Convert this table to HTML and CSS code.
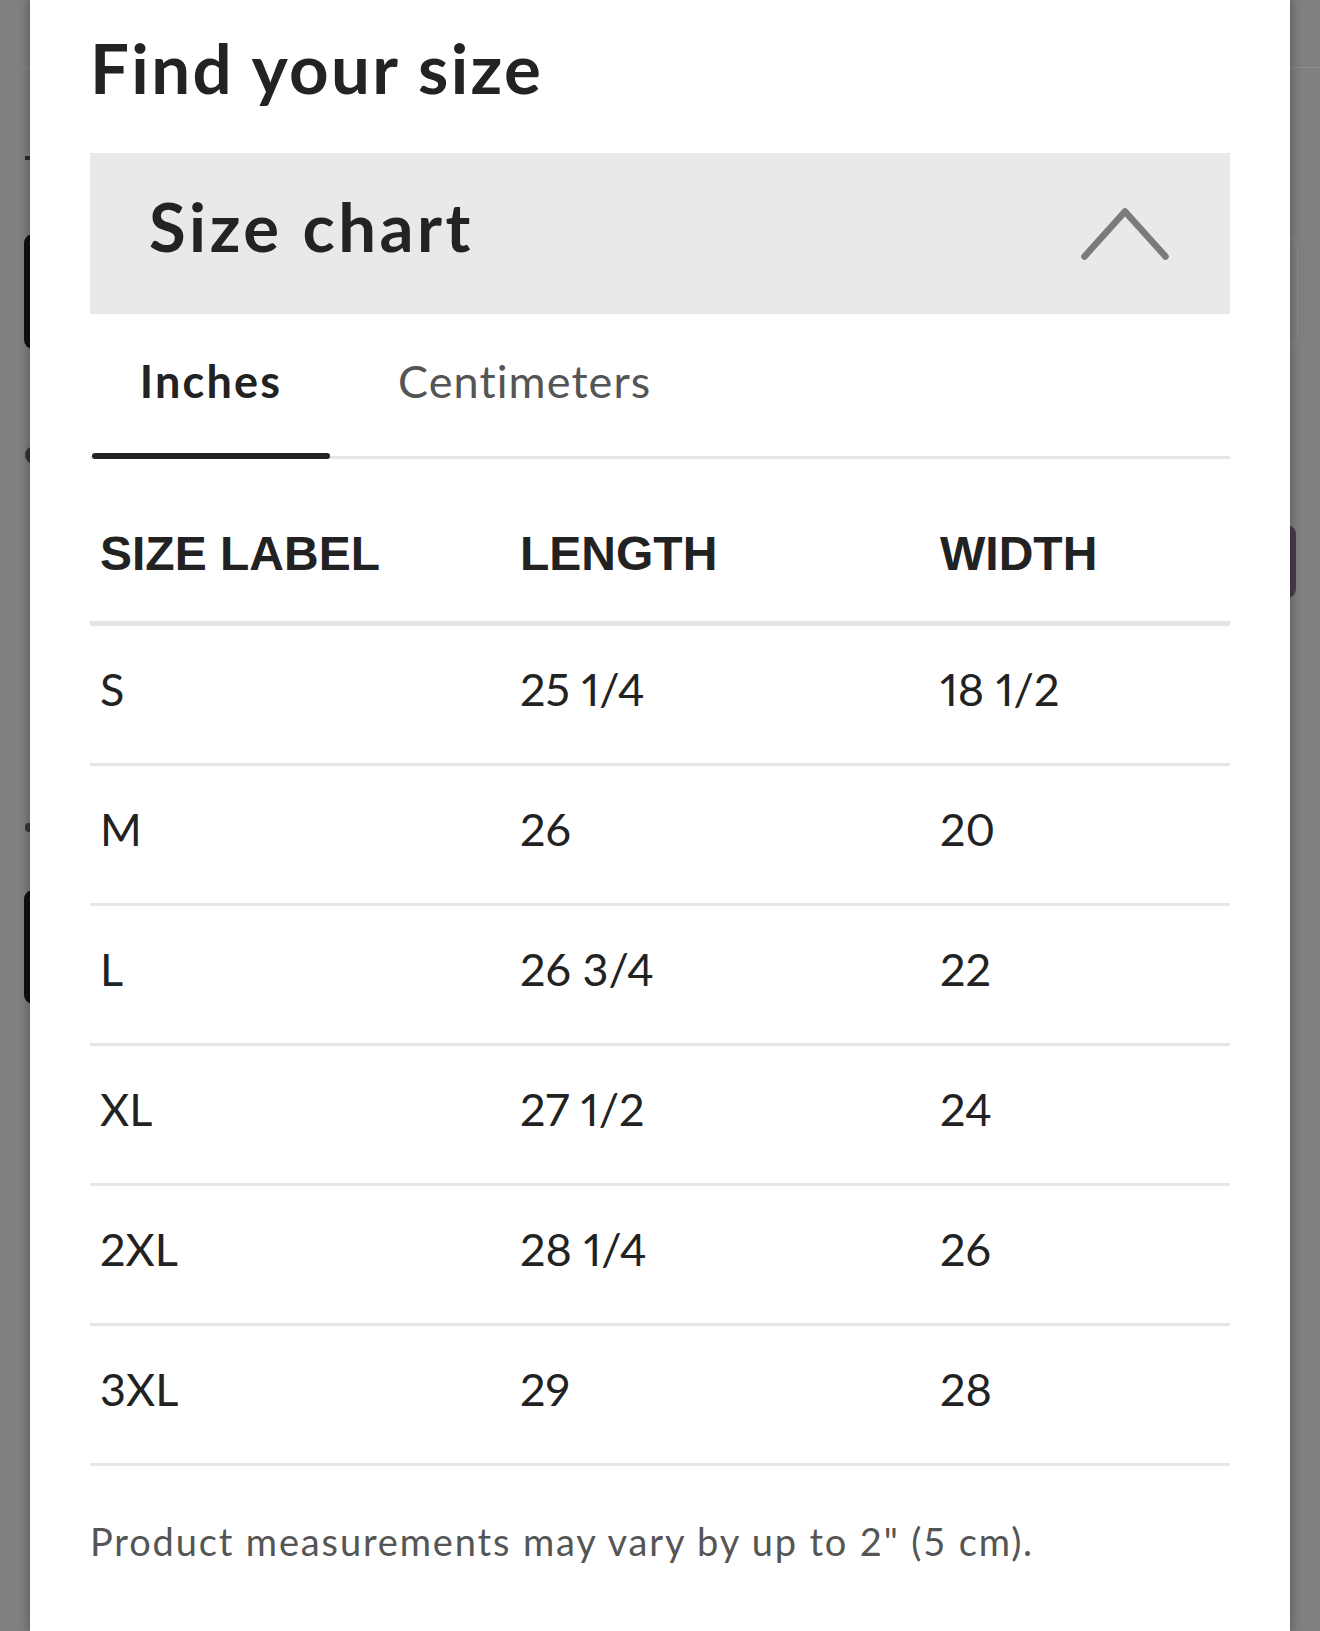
FILE: index.html
```html
<!DOCTYPE html>
<html lang="en">
<head>
<meta charset="utf-8">
<title>Find your size</title>
<link rel="stylesheet" href="styles.css">
</head>
<body>
<div class="backdrop">
  <span class="bg-line bg-line-l"></span>
  <span class="bg-dash"></span>
  <span class="bg-btn bg-btn-1"></span>
  <span class="bg-dot"></span>
  <span class="bg-s"></span>
  <span class="bg-btn bg-btn-2"></span>
  <span class="bg-line bg-line-r"></span>
  <span class="bg-outline"></span>
  <span class="bg-pill"></span>
</div>
<main class="modal">
  <h1 class="title">Find your size</h1>
  <section class="accordion">
    <div class="accordion-head">
      <h2 class="accordion-title">Size chart</h2>
      <svg class="chevron" width="88" height="52" viewBox="0 0 88 52" aria-hidden="true">
        <polyline points="3.5,48.5 44,3.5 84.5,48.5" fill="none" stroke="#7b7b7b" stroke-width="6.5" stroke-linecap="round" stroke-linejoin="round"/>
      </svg>
    </div>
    <div class="tabs">
      <div class="tab tab-active">Inches</div>
      <div class="tab tab-second">Centimeters</div>
    </div>
    <div class="chart">
      <div class="row head">
        <div class="cell">SIZE LABEL</div>
        <div class="cell">LENGTH</div>
        <div class="cell">WIDTH</div>
      </div>
      <div class="row"><div class="cell">S</div><div class="cell">25 1/4</div><div class="cell">18 1/2</div></div>
      <div class="row"><div class="cell">M</div><div class="cell">26</div><div class="cell">20</div></div>
      <div class="row"><div class="cell">L</div><div class="cell">26 3/4</div><div class="cell">22</div></div>
      <div class="row"><div class="cell">XL</div><div class="cell">27 1/2</div><div class="cell">24</div></div>
      <div class="row"><div class="cell">2XL</div><div class="cell">28 1/4</div><div class="cell">26</div></div>
      <div class="row"><div class="cell">3XL</div><div class="cell">29</div><div class="cell">28</div></div>
    </div>
    <p class="note">Product measurements may vary by up to 2" (5 cm).</p>
  </section>
</main>
</body>
</html>
```
FILE: styles.css
```css
html, body {
  margin: 0;
  padding: 0;
}
body {
  background: #808080;
  min-height: 1631px;
  position: relative;
  overflow: hidden;
  font-family: Lato, "Noto Sans", sans-serif;
  font-variant-ligatures: none;
  color: #222;
}
.backdrop {
  position: absolute;
  inset: 0;
  z-index: 0;
}
.backdrop span {
  position: absolute;
  display: block;
}
.bg-line { height: 1px; width: 40px; background: #8e8e8e; top: 67px; }
.bg-line-l { left: 22px; }
.bg-line-r { left: 1286px; }
.bg-dash { left: 25px; top: 156px; width: 30px; height: 4px; background: #2e2e2e; }
.bg-btn { left: 24px; width: 60px; background: #0f0f0f; border-radius: 9px; }
.bg-btn-1 { top: 234px; height: 115px; }
.bg-btn-2 { top: 890px; height: 114px; }
.bg-dot { left: 25px; top: 446px; width: 18px; height: 18px; border-radius: 50%; background: #333; }
.bg-s { left: 25px; top: 823px; width: 10px; height: 9px; border-radius: 4px; background: #3a3a3a; }
.bg-outline { left: 1250px; top: 237px; width: 46px; height: 106px; border: 1px solid #8d8d8d; border-radius: 9px; }
.bg-pill { left: 1250px; top: 525px; width: 46px; height: 73px; border-radius: 9px; background: #4c3c4a; }

.modal {
  position: relative;
  z-index: 1;
  margin: 0 30px;
  width: 1260px;
  min-height: 1631px;
  box-sizing: border-box;
  background: #fff;
  padding: 33px 60px 0;
  box-shadow: 0 0 10px 2px rgba(0, 0, 0, 0.28);
}
.title {
  margin: 0;
  font-size: 69px;
  line-height: 69px;
  font-weight: 700;
  letter-spacing: 2.35px;
  color: #232323;
}
.accordion {
  margin-top: 51px;
}
.accordion-head {
  height: 161px;
  box-sizing: border-box;
  background: #e9e9e9;
  display: flex;
  align-items: center;
  justify-content: space-between;
  padding: 0 61px 0 59px;
}
.accordion-title {
  margin: 0 0 14px;
  font-size: 67px;
  line-height: 67px;
  font-weight: 700;
  letter-spacing: 3.5px;
  color: #232323;
}
.chevron {
  display: block;
  flex: none;
}
.tabs {
  display: flex;
  padding-top: 45px;
  border-bottom: 3px solid #e6e6e6;
}
.tab {
  position: relative;
  font-size: 45px;
  line-height: 45px;
  padding-bottom: 52px;
  color: #555;
}
.tab-active {
  width: 238px;
  margin-left: 2px;
  text-align: center;
  font-weight: 700;
  letter-spacing: 2.2px;
  color: #222;
}
.tab-active::after {
  content: "";
  position: absolute;
  left: 0;
  right: 0;
  bottom: -3px;
  height: 6px;
  border-radius: 3px;
  background: #222;
}
.tab-second {
  padding-left: 68px;
  letter-spacing: 1.1px;
}
.row {
  display: grid;
  grid-template-columns: 420px 420px 1fr;
  padding: 41px 0 51px;
  border-bottom: 3px solid #e6e6e6;
  font-size: 45px;
  line-height: 45px;
  font-variant-numeric: proportional-nums;
  color: #222;
}
.row .cell {
  padding-left: 10px;
}
.row.head {
  padding: 71px 0 43px;
  border-bottom: 5px solid #e4e4e4;
  font-family: "Liberation Sans", Arial, sans-serif;
  font-weight: 700;
  font-size: 48px;
  line-height: 48px;
}
.note {
  margin: 56px 0 0;
  font-size: 38px;
  line-height: 38px;
  letter-spacing: 1.85px;
  color: #555;
}
```
